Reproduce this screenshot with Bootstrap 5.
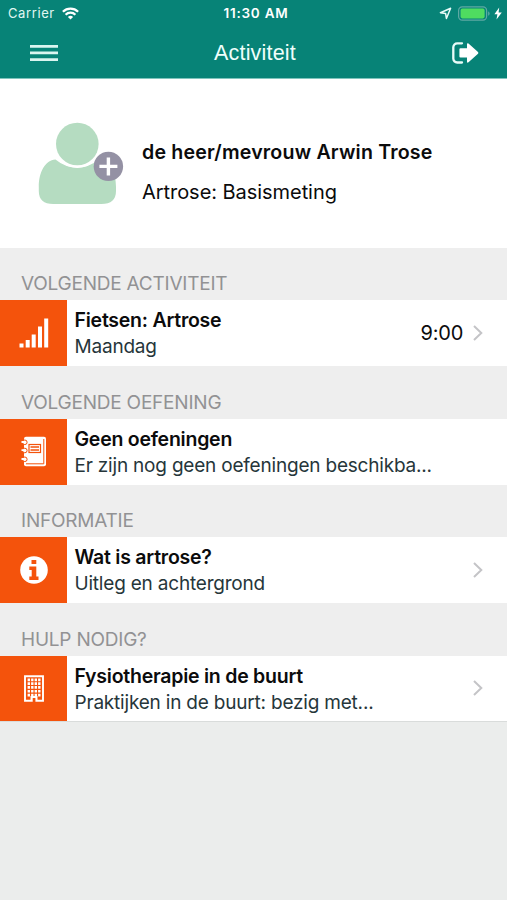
<!DOCTYPE html>
<html lang="nl">
<head>
<meta charset="utf-8">
<meta name="viewport" content="width=device-width, initial-scale=1">
<title>Activiteit</title>
<link href="https://cdn.jsdelivr.net/npm/bootstrap@5.3.0/dist/css/bootstrap.min.css" rel="stylesheet">
<style>
body{background:#ebedec;font-family:Inter,"Liberation Sans",sans-serif;color:#0b0b0c;min-height:900px;overflow:hidden}
svg{display:block;flex:none}
.app-head{background:#078377;border-bottom:1px solid #7fc4bd;height:79px;color:#fff}
.status-line{height:27px;font-size:13px;line-height:27px;padding:0 5px 0 8px}
.carrier{letter-spacing:.6px;color:#e0f7f2;width:215px}
.carrier svg{margin-left:7px}
.clock{font-weight:600;font-size:13.5px;letter-spacing:.75px;white-space:nowrap}
.status-end{width:213px}
.title-line{height:51px;padding:0 28px 0 30px}
.page-title{font:21.5px/51px "Liberation Sans",Arial,sans-serif;letter-spacing:.18px;color:#effffc;padding-top:1px}
.patient{height:168.5px;padding-left:38px}
.patient-text{padding-top:18px}
.patient-name{font-size:19.6px;font-weight:600;line-height:24px;letter-spacing:.18px}
.patient-sub{font-size:20px;line-height:24px;margin-top:16px;letter-spacing:-.05px}
.group-label{height:52.5px;background:#eee;padding:24.5px 0 0 21px;font-size:19px;line-height:24px;letter-spacing:-.22px;color:#929294}
.entry{height:66px;background:#fff}
.entry-icon{width:67px;background:#f4530c}
.entry-body{padding:7.4px 0 0 7.5px}
.entry-title{font-size:19.5px;font-weight:600;line-height:26px;letter-spacing:-.24px}
.entry-sub{font-size:19px;line-height:27px;letter-spacing:-.2px;color:#26363a}
.entry-time{font-size:20px;letter-spacing:-.25px;margin-right:10px}
.chev{margin-right:24px}
.last-entry{border-bottom:1px solid #d9dcdb}
</style>
<script src="https://cdn.jsdelivr.net/npm/bootstrap@5.3.0/dist/js/bootstrap.bundle.min.js"></script>
</head>
<body>
<header class="app-head">
  <div class="status-line d-flex align-items-center justify-content-between">
    <div class="carrier d-flex align-items-center"><span>Carrier</span>
      <svg width="17" height="13" viewBox="0 0 17 13" fill="none" stroke="#fff" stroke-width="2.3"><path d="M.9 4.8a10.8 10.8 0 0 1 15.2 0M3.6 7.7a7 7 0 0 1 9.8 0"/><path d="M8.5 12.6 5.9 10a3.7 3.7 0 0 1 5.2 0z" fill="#fff" stroke="none"/></svg>
    </div>
    <span class="clock">11:30 AM</span>
    <div class="status-end d-flex align-items-center justify-content-end">
      <svg width="13" height="13" viewBox="0 0 13 13" fill="none" stroke="#e8fbf8" stroke-width="1.5" stroke-linejoin="round"><path d="M1.4 5.7 11.6 1.3 7.4 11.5 6.6 6.4z"/></svg>
      <svg class="ms-1" width="34" height="15" viewBox="0 0 34 15"><rect x="2.6" y=".8" width="28" height="13.4" rx="3.6" fill="none" stroke="#5fa9a4" stroke-width="1.2"/><rect x="4.6" y="2.6" width="24" height="9.8" rx="1.8" fill="#4fdc60"/><path d="M32.1 5.2v4.6q1.5-.7 1.5-2.3t-1.5-2.3z" fill="#5fa9a4"/></svg>
      <svg class="ms-1" width="8" height="13" viewBox="0 0 8 13"><path d="M5.2.4.4 7.3h3L2.5 12.6 7.8 5.4H4.6z" fill="#fff"/></svg>
    </div>
  </div>
  <div class="title-line d-flex align-items-center justify-content-between">
    <svg width="28" height="16" viewBox="0 0 28 16" fill="#d9f5f0"><path d="M0 0h28v2.7H0zM0 6.6h28v2.7H0zM0 13.2h28v2.7H0z"/></svg>
    <span class="page-title">Activiteit</span>
    <svg width="27" height="22" viewBox="0 0 27 22"><path d="M10 1.3H5.2A3.9 3.9 0 0 0 1.3 5.2v11.4a3.9 3.9 0 0 0 3.9 3.9H10" fill="none" stroke="#e8fbf8" stroke-width="2.3" stroke-linecap="round"/><path d="M7.4 7.3q0-1.1 1.1-1.1H15V2.1Q15.2.7 16.5 1.5L26 10q.8.9 0 1.8l-9.5 8.5q-1.3.9-1.5-.6v-4.1H8.5q-1.1 0-1.1-1.1z" fill="#fff"/></svg>
  </div>
</header>
<main>
  <section class="patient bg-white d-flex align-items-center">
    <svg width="88" height="84" viewBox="0 0 88 84"><path d="M17.500 38.500C7 39.500.8 51 .8 66v4q0 13 14.5 13h48Q78 83 78 70v-4C78 51 72 39.500 61 38.500Q51 46.500 39 46.500T17.500 38.500z" fill="#b5dcc1"/><circle cx="39.300" cy="23" r="24" fill="#fff"/><circle cx="39.300" cy="23" r="21.300" fill="#b5dcc1"/><circle cx="70.400" cy="45.400" r="14.700" fill="#9491a4"/><path d="M70.400 36.400v18M61.400 45.400h18" stroke="#fff" stroke-width="3.400"/></svg>
    <div class="patient-text ms-3">
      <div class="patient-name"><span>de heer/mevrouw Arwin Trose</span></div>
      <div class="patient-sub"><span>Artrose: Basismeting</span></div>
    </div>
  </section>

  <div class="group-label"><span>VOLGENDE ACTIVITEIT</span></div>
  <div class="entry d-flex">
    <div class="entry-icon d-flex align-items-center justify-content-center">
      <svg width="30" height="30" viewBox="0 0 30 30" fill="#fff"><path d="M.5 25.500h4v4h-4zM6.700 22h4v7.500h-4zM12.700 16.500h4v13h-4zM19 8.500h4v21h-4zM25.200.5h4v29h-4z"/></svg>
    </div>
    <div class="entry-body flex-grow-1"><div class="entry-title"><span>Fietsen: Artrose</span></div><div class="entry-sub"><span>Maandag</span></div></div>
    <div class="d-flex align-items-center"><span class="entry-time">9:00</span>
      <svg class="chev" width="10" height="16" viewBox="0 0 10 16" fill="none" stroke="#c4c4c7" stroke-width="2"><path d="m1 1 7.300 7L1 15"/></svg></div>
  </div>

  <div class="group-label"><span>VOLGENDE OEFENING</span></div>
  <div class="entry d-flex">
    <div class="entry-icon d-flex align-items-center justify-content-center">
      <svg width="26" height="31" viewBox="0 0 26 31"><rect x="3" y=".7" width="22" height="29.600" rx="2" fill="#fff"/><path d="M22.800 3v24.800H5" fill="none" stroke="#f4530c" stroke-width="1"/><rect x="8" y="8.500" width="11.500" height="8" fill="#fff" stroke="#f4530c" stroke-width="1.200"/><path d="M9.500 11h8.500M9.500 14h8.500" stroke="#f4530c" stroke-width="1.300"/><g fill="#fff" stroke="#f4530c" stroke-width="1"><circle cx="3.800" cy="6.300" r="2.300"/><circle cx="3.800" cy="14.500" r="2.300"/><circle cx="3.800" cy="23.300" r="2.300"/></g><path d="M.5 6h4M.5 14.200h4M.5 23h4" stroke="#fff" stroke-width="1.800"/></svg>
    </div>
    <div class="entry-body flex-grow-1"><div class="entry-title"><span>Geen oefeningen</span></div><div class="entry-sub"><span>Er zijn nog geen oefeningen beschikba...</span></div></div>
  </div>

  <div class="group-label"><span>INFORMATIE</span></div>
  <div class="entry d-flex">
    <div class="entry-icon d-flex align-items-center justify-content-center">
      <svg width="28" height="28" viewBox="0 0 28 28"><circle cx="14" cy="14" r="13.800" fill="#fff"/><path d="M11.500 4h4.800v4h-4.800zM9.300 10.500h7v10h2.200V24H9.300v-3.500h2.400v-6.500H9.300z" fill="#f4530c"/></svg>
    </div>
    <div class="entry-body flex-grow-1"><div class="entry-title"><span>Wat is artrose?</span></div><div class="entry-sub"><span>Uitleg en achtergrond</span></div></div>
    <div class="d-flex align-items-center"><svg class="chev" width="10" height="16" viewBox="0 0 10 16" fill="none" stroke="#c4c4c7" stroke-width="2"><path d="m1 1 7.300 7L1 15"/></svg></div>
  </div>

  <div class="group-label"><span>HULP NODIG?</span></div>
  <div class="entry last-entry d-flex">
    <div class="entry-icon d-flex align-items-center justify-content-center">
      <svg width="20" height="27" viewBox="0 0 20 27"><path d="M1 1.200h18v24.600H1z" fill="none" stroke="#fff" stroke-width="1.900"/><path d="M4.800 3.500v18M8.300 3.500v18M11.800 3.500v18M15.300 3.500v18" stroke="#fff" stroke-width="2.400" stroke-dasharray="2.700 1.100"/><path d="M6.500 26v-5h7v5" fill="#fff"/><path d="M8.700 23h2.700v4H8.700z" fill="#f4530c"/></svg>
    </div>
    <div class="entry-body flex-grow-1"><div class="entry-title"><span>Fysiotherapie in de buurt</span></div><div class="entry-sub"><span>Praktijken in de buurt: bezig met...</span></div></div>
    <div class="d-flex align-items-center"><svg class="chev" width="10" height="16" viewBox="0 0 10 16" fill="none" stroke="#c4c4c7" stroke-width="2"><path d="m1 1 7.300 7L1 15"/></svg></div>
  </div>
</main>
</body>
</html>
